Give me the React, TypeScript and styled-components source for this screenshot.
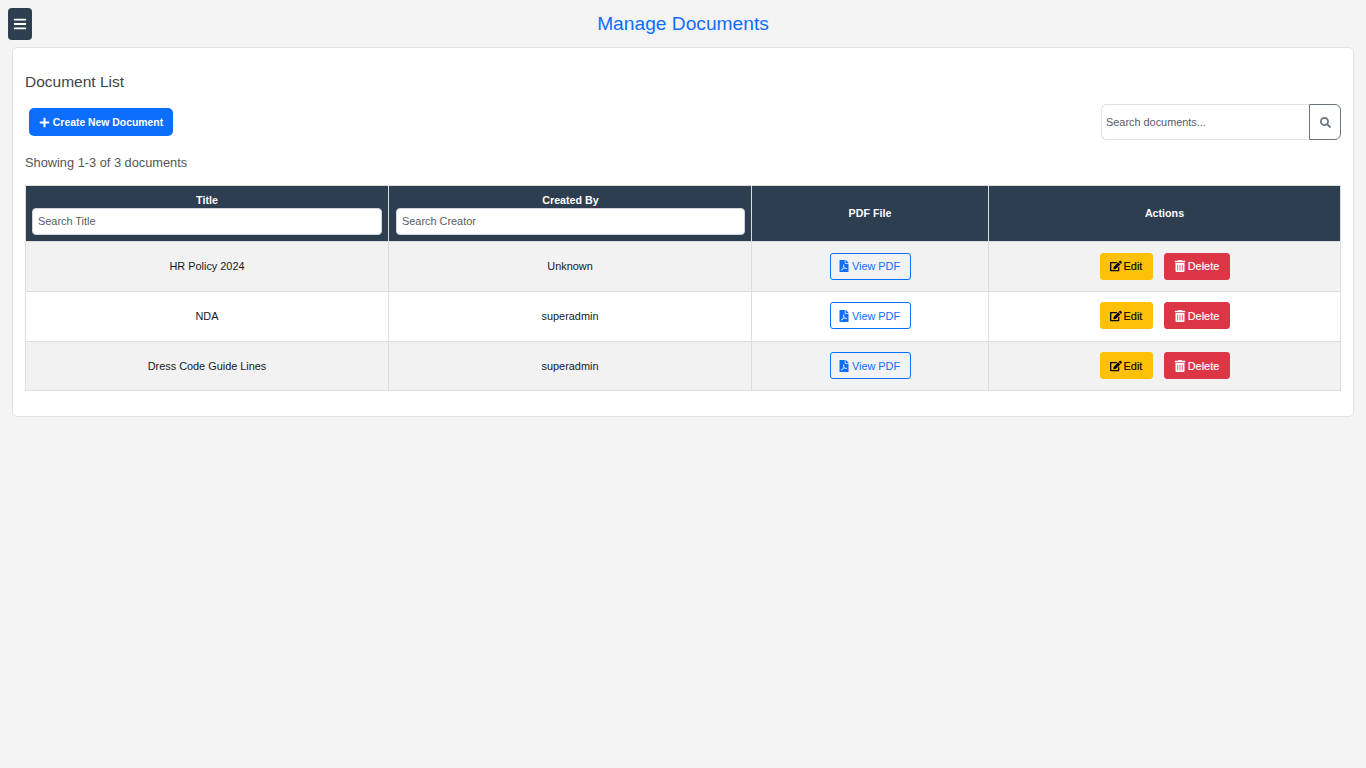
import React from "react";
import styled, { createGlobalStyle } from "styled-components";
import { FaBars, FaPlus, FaSearch, FaFilePdf, FaEdit, FaTrashAlt } from "react-icons/fa";

const Global = createGlobalStyle`
  html, body { margin: 0; padding: 0; background: #f4f4f4; }
  body { font-family: "Liberation Sans", Arial, sans-serif; color: #212529; }
  * { box-sizing: border-box; }
`;

const Page = styled.div`
  min-height: 768px;
  padding: 8px 12px 0;
`;
const TopBar = styled.header`
  position: relative;
  height: 32px;
  margin: 0 -4px 7px;
  display: flex;
  align-items: center;
  justify-content: center;
`;
const Toggle = styled.button`
  position: absolute;
  left: 0;
  top: 0;
  width: 24px;
  height: 32px;
  padding: 0;
  border: none;
  border-radius: 4px;
  background: #2c3e50;
  color: #fff;
  display: flex;
  align-items: center;
  justify-content: center;
  font-size: 14px;
`;
const Heading = styled.h1`
  margin: 0;
  font-size: 19.2px;
  font-weight: 400;
  line-height: 30px;
  color: #0d6efd;
`;
const Card = styled.section`
  background: #fff;
  border: 1px solid #dee2e6;
  border-radius: 5px;
  padding: 24px 12px 25px;
  height: 370px;
`;
const CardTitle = styled.h2`
  margin: 0 0 12px;
  font-size: 15.5px;
  font-weight: 400;
  line-height: 20px;
  color: #3f454b;
`;
const Toolbar = styled.div`
  display: flex;
  justify-content: space-between;
  align-items: center;
  height: 36px;
  padding-left: 4px;
`;
const CreateButton = styled.button`
  height: 28px;
  width: 144px;
  border: none;
  border-radius: 5px;
  background: #0d6efd;
  color: #fff;
  font: 700 10.4px "Liberation Sans", Arial, sans-serif;
  display: flex;
  align-items: center;
  justify-content: center;
  gap: 3px;
  padding: 0;
  svg { font-size: 11px; }
`;
const SearchGroup = styled.div`
  display: flex;
  width: 240px;
  height: 36px;
`;
const SearchField = styled.input`
  flex: 1;
  min-width: 0;
  height: 36px;
  border: 1px solid #dee2e6;
  border-right: none;
  border-radius: 6px 0 0 6px;
  padding: 0 4px;
  font: 400 10.9px "Liberation Sans", Arial, sans-serif;
  color: #212529;
  &::placeholder { color: #595c5f; opacity: 1; }
`;
const SearchButton = styled.button`
  width: 32px;
  height: 36px;
  padding: 0;
  border: 1px solid #6c757d;
  border-radius: 0 6px 6px 0;
  background: #fff;
  color: #6c757d;
  display: flex;
  align-items: center;
  justify-content: center;
  font-size: 11px;
`;
const Summary = styled.p`
  margin: 15px 0 14px;
  font-size: 12.8px;
  line-height: 16px;
  color: #555;
`;
const Table = styled.table`
  width: 1315px;
  table-layout: fixed;
  border-collapse: collapse;
  border: 1px solid #ddd;
  font-size: 10.9px;
`;
const HeadCell = styled.th`
  background: #2c3e50;
  color: #fff;
  font-size: 10.7px;
  font-weight: 700;
  height: 56px;
  padding: 6px 6px 7px;
  border: 1px solid #ddd;
  text-align: center;
  vertical-align: middle;
  line-height: 12px;
`;
const FilterHeadCell = styled(HeadCell)`
  padding: 8px 6px 6px;
`;
const CreatorHeadCell = styled(FilterHeadCell)`
  padding-left: 7px;
`;
const FilterInput = styled.input`
  display: block;
  width: 100%;
  height: 27px;
  margin-top: 2px;
  padding: 0 5px 1px;
  border: 1px solid #ced4da;
  border-radius: 4px;
  background: #fff;
  font: 400 10.9px "Liberation Sans", Arial, sans-serif;
  &::placeholder { color: #595c5f; opacity: 1; }
`;
const Row = styled.tr<{ $shade: boolean }>`
  background: ${(p) => (p.$shade ? "#f2f2f2" : "#fff")};
`;
const Cell = styled.td`
  height: 49.8px;
  padding: 0 6px 0.6px;
  border: 1px solid #ddd;
  text-align: center;
  vertical-align: middle;
  color: #16191c;
`;
const ActionButton = styled.button<{ $bg: string; $fg: string; $border?: string; $w: number }>`
  display: inline-flex;
  align-items: center;
  justify-content: center;
  gap: 2px;
  width: ${(p) => p.$w}px;
  height: 27px;
  padding: 0;
  border: 1px solid ${(p) => p.$border ?? p.$bg};
  border-radius: 3px;
  background: ${(p) => p.$bg};
  color: ${(p) => p.$fg};
  font: 400 10.9px "Liberation Sans", Arial, sans-serif;
  vertical-align: middle;
  svg { font-size: 12px; }
`;
const PdfButton = styled(ActionButton)`
  padding-right: 2px;
`;
const DeleteButton = styled(ActionButton)`
  -webkit-text-stroke: 0.15px currentColor;
`;
const EditButton = styled(DeleteButton)`
  margin-right: 11px;
`;

const rows = [
  { title: "HR Policy 2024", by: "Unknown" },
  { title: "NDA", by: "superadmin" },
  { title: "Dress Code Guide Lines", by: "superadmin" },
];

export default function App() {
  return (
    <Page>
      <Global />
      <TopBar>
        <Toggle aria-label="menu"><FaBars /></Toggle>
        <Heading>Manage Documents</Heading>
      </TopBar>
      <Card>
        <CardTitle>Document List</CardTitle>
        <Toolbar>
          <CreateButton><FaPlus /> Create New Document</CreateButton>
          <SearchGroup>
            <SearchField placeholder="Search documents..." />
            <SearchButton aria-label="search"><FaSearch /></SearchButton>
          </SearchGroup>
        </Toolbar>
        <Summary>Showing 1-3 of 3 documents</Summary>
        <Table>
          <colgroup>
            <col width="363" />
            <col width="363" />
            <col width="237" />
            <col width="352" />
          </colgroup>
          <thead>
            <tr>
              <FilterHeadCell>Title<FilterInput placeholder="Search Title" /></FilterHeadCell>
              <CreatorHeadCell>Created By<FilterInput placeholder="Search Creator" /></CreatorHeadCell>
              <HeadCell>PDF File</HeadCell>
              <HeadCell>Actions</HeadCell>
            </tr>
          </thead>
          <tbody>
            {rows.map((r, i) => (
              <Row key={r.title} $shade={i % 2 === 0}>
                <Cell>{r.title}</Cell>
                <Cell>{r.by}</Cell>
                <Cell>
                  <PdfButton $w={81} $bg="transparent" $fg="#0d6efd" $border="#0d6efd"><FaFilePdf /> View PDF</PdfButton>
                </Cell>
                <Cell>
                  <EditButton $w={53} $bg="#ffc107" $fg="#000"><FaEdit /> Edit</EditButton>
                  <DeleteButton $w={66} $bg="#dc3545" $fg="#fff"><FaTrashAlt /> Delete</DeleteButton>
                </Cell>
              </Row>
            ))}
          </tbody>
        </Table>
      </Card>
    </Page>
  );
}
